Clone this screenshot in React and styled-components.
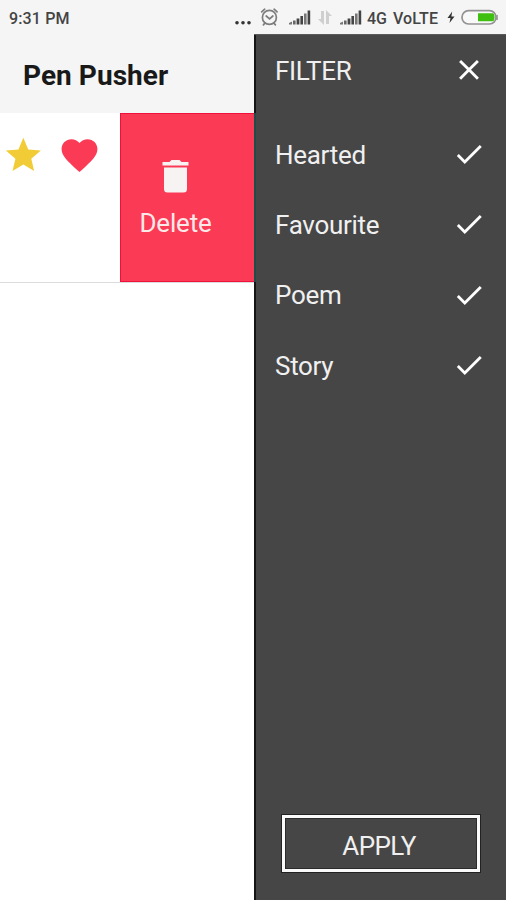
import React from "react";
import styled, { createGlobalStyle } from "styled-components";

const GlobalStyle = createGlobalStyle`
  * { box-sizing: border-box; }
  body { margin: 0; background: #fff; font-family: Roboto, sans-serif; overflow: hidden; }
`;

const Screen = styled.div`
  width: 506px;
  height: 900px;
  display: flex;
  flex-direction: column;
  background: #fff;
`;

const StatusBar = styled.header`
  height: 34px;
  flex: none;
  display: flex;
  align-items: center;
  padding: 0 8px 0 9px;
  background: #f5f5f5;
  color: #444;
`;

const StatusText = styled.span`
  width: ${(p) => p.$width}px;
  margin-right: ${(p) => p.$gap || 0}px;
  font-size: 16px;
  line-height: 20px;
  font-weight: 500;
  letter-spacing: ${(p) => p.$spacing || 0}px;
  padding-top: 3px;
  white-space: nowrap;
`;

const StatusIcon = styled.svg`
  flex: none;
  display: block;
  margin-right: ${(p) => p.$gap || 0}px;
`;

const Content = styled.div`
  flex: 1;
  display: grid;
  grid-template-columns: 254px 252px;
`;

const Page = styled.main`
  display: flex;
  flex-direction: column;
  background: #fff;
`;

const TitleBar = styled.div`
  height: 79px;
  padding: 25px 0 0 23px;
  background: #f5f5f5;
`;

const Title = styled.h1`
  margin: 0;
  font-size: 28px;
  line-height: 34px;
  font-weight: 700;
  letter-spacing: 0.05px;
  color: #191919;
  white-space: nowrap;
`;

const SwipeRow = styled.div`
  height: 170px;
  display: flex;
  border-bottom: 1px solid #dcdcdc;
`;

const Marks = styled.div`
  width: 120px;
  display: flex;
  gap: 14px;
  padding: 21px 0 0 2px;
`;

const Icon = styled.svg`
  display: block;
  flex: none;
  width: ${(p) => p.$size}px;
  height: ${(p) => p.$size}px;
  fill: ${(p) => p.$color};
`;

const DeleteAction = styled.button`
  flex: 1;
  display: flex;
  flex-direction: column;
  align-items: center;
  margin: 0;
  padding: 46px 24px 0 0;
  border: 1px solid #f0103c;
  border-right: 0;
  background: #fb3b55;
  color: #fbe9ea;
  font-family: inherit;
`;

const Label = styled.span`
  font-size: 26px;
  line-height: 32px;
  letter-spacing: ${(p) => p.$spacing ?? -0.3}px;
  white-space: nowrap;
`;

const DeleteLabel = styled(Label)`
  margin-top: 14px;
`;

const Drawer = styled.aside`
  display: flex;
  flex-direction: column;
  padding-left: 2px;
  border-top: 1px solid #5a5a5a;
  background:
    linear-gradient(#151515 78px, #1f4b4a 78px 247px, #151515 247px) left / 2px 100% no-repeat,
    #464646;
  color: #f0f0f0;
`;

const DrawerRow = styled.div`
  height: ${(p) => p.$height}px;
  display: flex;
  align-items: center;
  justify-content: space-between;
  padding: ${(p) => p.$top || 0}px 20px 0 19px;
`;

const Options = styled.div`
  margin-top: 14px;
`;

const OptionLabel = styled(Label)`
  padding-top: 1px;
`;

const ApplyButton = styled.button`
  width: 198px;
  height: 57px;
  margin: auto 0 28px 26px;
  border: 3px solid #fafafa;
  background: #464646;
  outline: 1px solid #222;
  box-shadow: inset 0 0 0 1px #2b2b2b;
  color: #f0f0f0;
  font-family: inherit;
  padding: 4px 4px 0 0;
`;

function Signal({ gap }) {
  return (
    <StatusIcon $gap={gap} width="22" height="18" viewBox="0 0 22 18" fill="#444">
      <path d="M0 16.5V15l3-1.5v3z" fill="#777" />
      <rect x="4" y="12.5" width="2.6" height="4" fill="#666" />
      <rect x="7.6" y="10.5" width="2.8" height="6" />
      <rect x="11.4" y="8" width="2.6" height="8.5" />
      <rect x="15" y="5.5" width="2.6" height="11" fill="#777" />
      <rect x="18.6" y="2.5" width="2.6" height="14" />
    </StatusIcon>
  );
}

const options = ["Hearted", "Favourite", "Poem", "Story"];

export default function App() {
  return (
    <>
      <GlobalStyle />
      <Screen>
        <StatusBar>
          <StatusText $width={226} $spacing={0.15}>9:31 PM</StatusText>
          <StatusIcon $gap={9} width="16" height="20" viewBox="0 0 16 20" fill="#333">
            <circle cx="2" cy="15.7" r="1.8" />
            <circle cx="8" cy="15.7" r="1.8" />
            <circle cx="14" cy="15.7" r="1.8" />
          </StatusIcon>
          <StatusIcon $gap={10} width="19" height="20" viewBox="0 0 19 20" fill="none" stroke="#7d7d7d" strokeWidth="1.7">
            <circle cx="9.4" cy="10.4" r="7" />
            <path d="M1.7 4.9 4.7 2.2M17.1 4.9 14.1 2.2M4.9 16.2 3.4 17.8M13.9 16.2l1.5 1.6M6.2 9l3.4 2.9L12.9 9" strokeLinecap="round" />
          </StatusIcon>
          <Signal gap={7} />
          <StatusIcon $gap={8} width="14" height="18" viewBox="0 0 14 18" fill="#cfcfcf">
            <path d="M3 3h3v14L0 11h3zM8 16V2l6 6h-3v8z" />
          </StatusIcon>
          <Signal gap={5} />
          <StatusText $width={21} $gap={5}>4G</StatusText>
          <StatusText $width={46} $gap={8} $spacing={0.1}>VoLTE</StatusText>
          <StatusIcon $gap={6} width="8" height="14" viewBox="0 0 8 14" fill="#333">
            <path d="M5.2 1.5.5 8h3L2.500 13 7.500 6.500H4.400z" />
          </StatusIcon>
          <StatusIcon width="37" height="16" viewBox="0 0 37 16">
            <rect x="1" y="1.7" width="34" height="13.3" rx="6.5" fill="#f8f8f8" stroke="#929292" strokeWidth="1.7" />
            <path d="M36 6v5" stroke="#929292" strokeWidth="1.6" />
            <path d="M17 4.3h14.5q2 0 2 4t-2 4H17z" fill="#3fc010" />
          </StatusIcon>
        </StatusBar>
        <Content>
          <Page>
            <TitleBar>
              <Title>Pen Pusher</Title>
            </TitleBar>
            <SwipeRow>
              <Marks>
                <Icon $size={42} $color="#f2cc36" viewBox="-0.2 -0.2 24 24">
                  <path d="M12 17.27 18.18 21l-1.64-7.03L22 9.24l-7.19-.61L12 2 9.19 8.63 2 9.24l5.46 4.73L5.82 21z" />
                </Icon>
                <Icon $size={43} $color="#fb3b55" viewBox="0 0.1 24 24">
                  <path d="m12 21.35-1.45-1.32C5.4 15.36 2 12.28 2 8.5 2 5.42 4.42 3 7.5 3c1.74 0 3.41.81 4.5 2.09C13.09 3.81 14.76 3 16.5 3 19.58 3 22 5.42 22 8.5c0 3.78-3.4 6.86-8.55 11.54z" />
                </Icon>
              </Marks>
              <DeleteAction>
                <svg width="27" height="33" viewBox="0 0 27 33" fill="#f7f3f3">
                  <path d="M.5 2h7l2-2h8l2 2h7v3.5H.5zM2 7.5h23V29q0 3.5-3.5 3.5h-16Q2 32.5 2 29z" />
                </svg>
                <DeleteLabel $spacing={-0.2}>Delete</DeleteLabel>
              </DeleteAction>
            </SwipeRow>
          </Page>
          <Drawer>
            <DrawerRow $height={70} $top={1}>
              <Label>FILTER</Label>
              <Icon $size={34} $color="#fff" viewBox="0 0.8 24 24">
                <path d="M19 6.41 17.59 5 12 10.59 6.41 5 5 6.41 10.59 12 5 17.59 6.41 19 12 13.41 17.59 19 19 17.59 13.41 12z" />
              </Icon>
            </DrawerRow>
            <Options>
              {options.map((name) => (
                <DrawerRow key={name} $height={70.3}>
                  <OptionLabel>{name}</OptionLabel>
                  <Icon $size={34} $color="#fff" viewBox="0 0 24 24">
                    <path d="M9 16.17 4.83 12l-1.42 1.41L9 19 21 7l-1.41-1.41z" />
                  </Icon>
                </DrawerRow>
              ))}
            </Options>
            <ApplyButton>
              <Label $spacing={-0.6}>APPLY</Label>
            </ApplyButton>
          </Drawer>
        </Content>
      </Screen>
    </>
  );
}
